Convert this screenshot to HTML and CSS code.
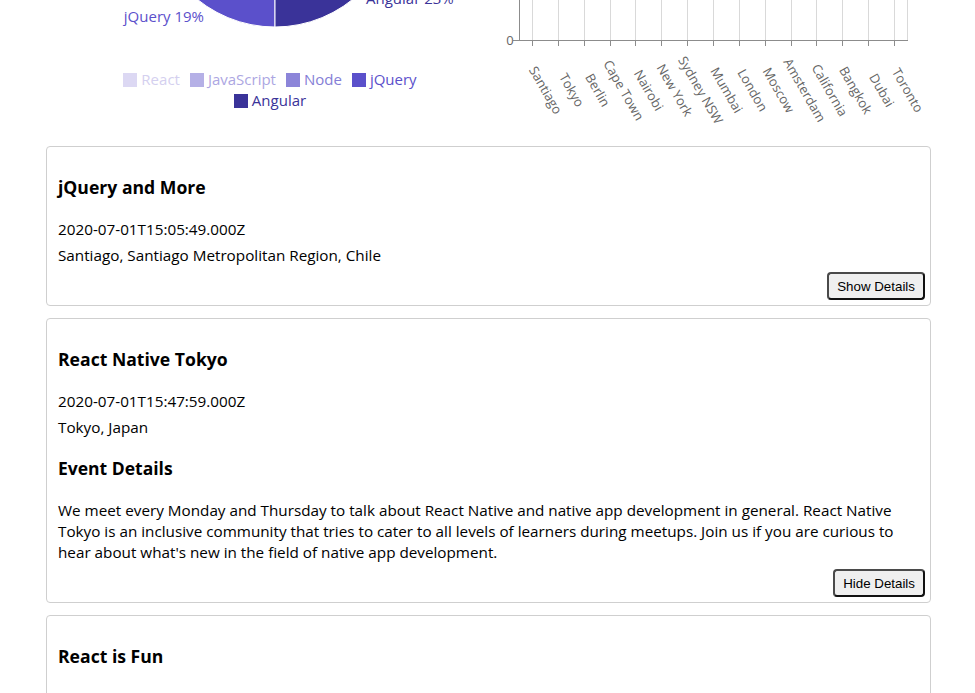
FILE: index.html
```html
<!DOCTYPE html>
<html>
<head>
<meta charset="utf-8">
<link rel="stylesheet" href="styles.css">
</head>
<body>
<main class="page">
  <section class="charts">
    <div class="pie-col">
      <svg class="pie-svg" width="458" height="69" viewBox="0 0 458 69">
        <path d="M229 -96 L229 27 A123 123 0 0 1 106 -96 Z" fill="#5b50cb" stroke="#fff" stroke-width="1"/>
        <path d="M229 -96 L352 -96 A123 123 0 0 1 229 27 Z" fill="#3a3399" stroke="#fff" stroke-width="1"/>
        <text x="158" y="22" text-anchor="end" class="pie-label" fill="#5b50cb">jQuery 19%</text>
        <text x="320" y="4" text-anchor="start" class="pie-label" fill="#3a3399">Angular 23%</text>
      </svg>
      <ul class="legend">
        <li class="legend-item"><span class="sw sw-react"></span><span class="lt lt-react">React</span></li>
        <li class="legend-item"><span class="sw sw-js"></span><span class="lt lt-js">JavaScript</span></li>
        <li class="legend-item"><span class="sw sw-node"></span><span class="lt lt-node">Node</span></li>
        <li class="legend-item"><span class="sw sw-jq"></span><span class="lt lt-jq">jQuery</span></li>
        <li class="legend-item"><span class="sw sw-ng"></span><span class="lt lt-ng">Angular</span></li>
      </ul>
    </div>
    <div class="bar-col">
      <svg class="bar-svg" width="427" height="134" viewBox="0 0 427 134">
        <g class="grid">
          <line x1="28.5" y1="0" x2="28.5" y2="40"/>
          <line x1="54.5" y1="0" x2="54.5" y2="40"/>
          <line x1="80.5" y1="0" x2="80.5" y2="40"/>
          <line x1="106.5" y1="0" x2="106.5" y2="40"/>
          <line x1="131.5" y1="0" x2="131.5" y2="40"/>
          <line x1="157.5" y1="0" x2="157.5" y2="40"/>
          <line x1="183.5" y1="0" x2="183.5" y2="40"/>
          <line x1="209.5" y1="0" x2="209.5" y2="40"/>
          <line x1="235.5" y1="0" x2="235.5" y2="40"/>
          <line x1="261.5" y1="0" x2="261.5" y2="40"/>
          <line x1="287.5" y1="0" x2="287.5" y2="40"/>
          <line x1="312.5" y1="0" x2="312.5" y2="40"/>
          <line x1="338.5" y1="0" x2="338.5" y2="40"/>
          <line x1="364.5" y1="0" x2="364.5" y2="40"/>
          <line x1="390.5" y1="0" x2="390.5" y2="40"/>
          <line x1="403.5" y1="0" x2="403.5" y2="40"/>
        </g>
        <g class="axis">
          <line x1="15.5" y1="0" x2="15.5" y2="40.5"/>
          <line x1="15" y1="40.5" x2="404" y2="40.5"/>
          <line x1="9" y1="40.5" x2="15" y2="40.5"/>
          <line x1="28.5" y1="40" x2="28.5" y2="46"/>
          <line x1="54.5" y1="40" x2="54.5" y2="46"/>
          <line x1="80.5" y1="40" x2="80.5" y2="46"/>
          <line x1="106.5" y1="40" x2="106.5" y2="46"/>
          <line x1="131.5" y1="40" x2="131.5" y2="46"/>
          <line x1="157.5" y1="40" x2="157.5" y2="46"/>
          <line x1="183.5" y1="40" x2="183.5" y2="46"/>
          <line x1="209.5" y1="40" x2="209.5" y2="46"/>
          <line x1="235.5" y1="40" x2="235.5" y2="46"/>
          <line x1="261.5" y1="40" x2="261.5" y2="46"/>
          <line x1="287.5" y1="40" x2="287.5" y2="46"/>
          <line x1="312.5" y1="40" x2="312.5" y2="46"/>
          <line x1="338.5" y1="40" x2="338.5" y2="46"/>
          <line x1="364.5" y1="40" x2="364.5" y2="46"/>
          <line x1="390.5" y1="40" x2="390.5" y2="46"/>
        </g>
        <g class="ticks">
          <text x="6" y="40" text-anchor="end" dominant-baseline="central">0</text>
          <text x="42" y="90" transform="rotate(60 42 90)">Santiago</text>
          <text x="68" y="90" transform="rotate(60 68 90)">Tokyo</text>
          <text x="94" y="90" transform="rotate(60 94 90)">Berlin</text>
          <text x="120" y="90" transform="rotate(60 120 90)">Cape Town</text>
          <text x="145" y="90" transform="rotate(60 145 90)">Nairobi</text>
          <text x="171" y="90" transform="rotate(60 171 90)">New York</text>
          <text x="197" y="90" transform="rotate(60 197 90)">Sydney NSW</text>
          <text x="223" y="90" transform="rotate(60 223 90)">Mumbai</text>
          <text x="249" y="90" transform="rotate(60 249 90)">London</text>
          <text x="275" y="90" transform="rotate(60 275 90)">Moscow</text>
          <text x="301" y="90" transform="rotate(60 301 90)">Amsterdam</text>
          <text x="326" y="90" transform="rotate(60 326 90)">California</text>
          <text x="352" y="90" transform="rotate(60 352 90)">Bangkok</text>
          <text x="378" y="90" transform="rotate(60 378 90)">Dubai</text>
          <text x="404" y="90" transform="rotate(60 404 90)">Toronto</text>
        </g>
      </svg>
    </div>
  </section>

  <article class="card">
    <h2 class="card-title">jQuery and More</h2>
    <p class="card-line card-date">2020-07-01T15:05:49.000Z</p>
    <p class="card-line">Santiago, Santiago Metropolitan Region, Chile</p>
    <div class="card-actions"><button class="btn">Show Details</button></div>
  </article>

  <article class="card">
    <h2 class="card-title">React Native Tokyo</h2>
    <p class="card-line card-date">2020-07-01T15:47:59.000Z</p>
    <p class="card-line">Tokyo, Japan</p>
    <h3 class="details-title">Event Details</h3>
    <p class="details-text">We meet every Monday and Thursday to talk about React Native and native app development in general. React Native Tokyo is an inclusive community that tries to cater to all levels of learners during meetups. Join us if you are curious to hear about what's new in the field of native app development.</p>
    <div class="card-actions"><button class="btn">Hide Details</button></div>
  </article>

  <article class="card">
    <h2 class="card-title">React is Fun</h2>
    <p class="card-line card-date">2020-07-01T16:10:00.000Z</p>
    <p class="card-line">Berlin, Germany</p>
    <div class="card-actions"><button class="btn">Show Details</button></div>
  </article>
</main>
</body>
</html>
```

FILE: styles.css
```css
html, body {
  margin: 0;
  padding: 0;
  background: #fff;
}

body {
  font-family: "Open Sans", "Noto Sans", sans-serif;
  font-size: 15.25px;
  color: #000;
  overflow: hidden;
}

.page {
  width: 885px;
  margin-left: 46px;
}

.charts {
  display: grid;
  grid-template-columns: 458px 427px;
  height: 134px;
  margin-bottom: 12px;
}

.pie-col {
  display: flex;
  flex-direction: column;
  align-items: center;
}

.pie-svg {
  display: block;
}

.pie-label {
  font-family: "Open Sans", "Noto Sans", sans-serif;
  font-size: 15px;
}

.legend {
  list-style: none;
  margin: 0;
  padding: 0;
  width: 340px;
  display: flex;
  flex-wrap: wrap;
  justify-content: center;
  line-height: 21px;
  font-size: 15px;
}

.legend-item {
  display: flex;
  align-items: center;
  margin-right: 10px;
}

.sw {
  width: 14px;
  height: 14px;
  margin-right: 4px;
  display: inline-block;
}

.sw-react { background: #dcd8f3; }
.sw-js { background: #b5b0e6; }
.sw-node { background: #8c85d9; }
.sw-jq { background: #5b50cb; }
.sw-ng { background: #3a3399; }

.lt-react { color: #d4d0ef; }
.lt-js { color: #aca6e2; }
.lt-node { color: #857ed6; }
.lt-jq { color: #5b50cb; }
.lt-ng { color: #3a3399; }

.bar-svg {
  display: block;
  overflow: visible;
}

.grid line {
  stroke: #d9d9d9;
  stroke-width: 1;
}

.axis line {
  stroke: #8c8c8c;
  stroke-width: 1;
}

.ticks text {
  font-family: "Open Sans", "Noto Sans", sans-serif;
  font-size: 13px;
  fill: #666;
  text-anchor: middle;
  dominant-baseline: central;
}

.card {
  border: 1px solid #cfcfcf;
  border-radius: 4px;
  padding: 0 5px 5px 11px;
  margin-bottom: 12px;
}

.card-title {
  font-size: 17.6px;
  font-weight: 700;
  line-height: 27px;
  margin: 27px 0 0;
}

.card-line {
  margin: 5px 0 0;
  line-height: 21px;
}

.card-line.card-date {
  margin-top: 18px;
}

.details-title {
  font-size: 17.5px;
  font-weight: 700;
  line-height: 27px;
  margin: 17px 0 0;
}

.details-text {
  margin: 18px 0 0;
  line-height: 21px;
  padding-right: 7px;
}

.card-actions {
  display: flex;
  justify-content: flex-end;
  margin-top: 6px;
}

.btn {
  font-family: Arial, "Liberation Sans", sans-serif;
  font-size: 13.33px;
  height: 28px;
  padding: 0 8px;
  background: #efefef;
  color: #000;
  border: 2px solid;
  border-color: #4a4a4a #111 #111 #4a4a4a;
  border-radius: 4px;
}
```
